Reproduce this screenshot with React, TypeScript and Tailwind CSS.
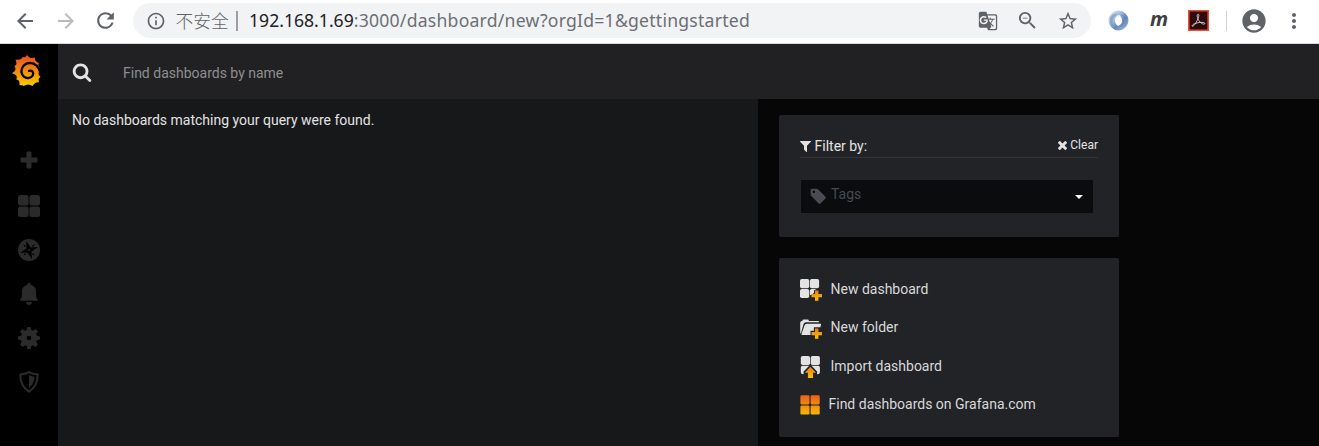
import type { ReactNode } from "react";
import {
  MdAccountCircle,
  MdArrowBack,
  MdArrowForward,
  MdGTranslate,
  MdMoreVert,
  MdOutlineInfo,
  MdRefresh,
  MdStarBorder,
  MdZoomOut,
} from "react-icons/md";

function BrowserBar() {
  return (
    <header className="flex h-[44px] shrink-0 items-start border-b border-[#d5d7da] bg-white pt-[3px] text-[#5f6368]">
      <div className="flex h-[35px] w-[133px] shrink-0 items-center pl-[13px]">
        <MdArrowBack size={24} className="shrink-0" />
        <MdArrowForward size={24} className="ml-[17px] shrink-0 text-[#b9bbbd]" />
        <MdRefresh size={25} className="ml-[15px] shrink-0" />
      </div>
      <div className="flex h-[35px] w-[958px] shrink-0 items-center rounded-full bg-[#f1f3f4] pl-[12.5px]">
        <MdOutlineInfo size={20} className="shrink-0" />
        <div className="ml-[10px] w-[60px] shrink-0 whitespace-nowrap font-['Noto_Sans_CJK_SC',sans-serif] text-[17.7px] leading-[35px] font-light">
          不安全
        </div>
        <div className="h-[20px] w-[2px] shrink-0 bg-[#9b9ea2]" />
        <div className="ml-[11.5px] w-[729px] whitespace-nowrap pb-px font-['Noto_Sans','Open_Sans',sans-serif] text-[17.6px] leading-[34px]">
          <span className="text-[#202124]">192.168.1.69</span>
          <span className="tracking-[0.235px] text-[#6b6f74]">:3000/dashboard/new?orgId=1&amp;gettingstarted</span>
        </div>
        <MdGTranslate size={20} className="shrink-0" />
        <MdZoomOut size={23} className="ml-[18px] shrink-0" />
        <MdStarBorder size={22} className="ml-[18px] shrink-0" />
      </div>
      <div className="flex h-[35px] flex-1 items-center pl-[17px]">
        <svg width="21" height="21" viewBox="0 0 21 21" className="shrink-0">
          <defs>
            <linearGradient id="ring" x1="0" y1="0" x2="1" y2="1">
              <stop offset="0" stopColor="#e8f0f8" />
              <stop offset=".35" stopColor="#a8c0dc" />
              <stop offset=".6" stopColor="#6289bb" />
              <stop offset="1" stopColor="#b5cbe3" />
            </linearGradient>
          </defs>
          <path fillRule="evenodd" fill="url(#ring)" d="M10.500.5a10 10 0 1 1 0 20a10 10 0 0 1 0-20zm.5 4.500c-3.500 1.500-4.500 3.500-4 6.500.5 2 1.500 3.500 3 4.500 3.500-1.500 4.500-3.500 4-6.500-.5-2-1.500-3.500-3-4.500z" />
          <path d="M11 5c3-.5 5.500 2 5 5-.5 3-2.500 5-6 6 5 2 9 0 9.500-5 0-4-3.500-7-8.500-6z" fill="#587fae" opacity=".35" />
          <path d="M2.500 7c-1.500 4 0 8 3 9.500C4 13 4 9 7 6.500 8 5 9 4 10 3.500 6 3 3.500 4.500 2.500 7z" fill="#6e93bf" opacity=".6" />
        </svg>
        <div className="ml-[20px] flex h-[30px] w-[20px] shrink-0 items-center justify-center pb-[3px] font-['Open_Sans',sans-serif] text-[20px] leading-[30px] font-bold text-[#3c3f40] italic">
          m
        </div>
        <svg width="21" height="21" viewBox="0 0 21 21" className="ml-[19px] shrink-0">
          <path d="M.8.800h19.400v19.400H.8z" fill="#2b0b0e" stroke="#f04a35" strokeWidth="1.600" />
          <path d="M9.900 4.200c-1.300.4-.7 3.200.2 5 .9 2 2.500 3.800 4.500 4.700 1.500.6 2.500.1 2.200-.6-.6-1.200-4.300-1.200-7.600-.4-2.600.6-5 1.900-5.100 2.900-.1 1 1.300.5 2.600-1.200 1.600-2.200 3.500-5.800 4-8 .4-1.600 0-2.700-.8-2.400z" fill="none" stroke="#e0d3d3" strokeWidth=".9" />
        </svg>
        <div className="ml-[17px] h-[20px] w-px shrink-0 bg-[#cfd1d4]" />
        <MdAccountCircle size={28} className="ml-[13px] shrink-0" />
        <MdMoreVert size={24} className="ml-[14px] shrink-0" />
      </div>
    </header>
  );
}

function Gradients() {
  return (
    <svg width="0" height="0" className="absolute">
      <defs>
        <linearGradient id="flame" x1="0" y1="0" x2="0" y2="1">
          <stop offset="0" stopColor="#ea4e1b" />
          <stop offset=".25" stopColor="#ee6a1c" />
          <stop offset=".65" stopColor="#f59a0b" />
          <stop offset="1" stopColor="#fbd000" />
        </linearGradient>
        <linearGradient id="amber" x1="0" y1="0" x2="0" y2="1">
          <stop offset="0" stopColor="#eb7b18" />
          <stop offset="1" stopColor="#f8c300" />
        </linearGradient>
        <linearGradient id="tiles" x1="0" y1="0" x2="0" y2="20" gradientUnits="userSpaceOnUse">
          <stop offset="0" stopColor="#eb5f19" />
          <stop offset="1" stopColor="#f6b905" />
        </linearGradient>
      </defs>
    </svg>
  );
}

function GrafanaLogo() {
  return (
    <svg width="30" height="31" viewBox="0 0 30 31" className="mr-[5px]">
      <path
        d="M15 0q1.500 2.200 3.600 2.900 2 .2 4.200-.4-.1 2 .7 3.200 1.300 1.600 3.200 2.300l-.3 2.400q1.900 2.600 2.200 6.100l-1.900.5q-.4 1.800.3 3.200l1.500 1.600q-1.800 1.400-1.900 2.700l.4 2.700q-2.500-.1-3.800.7-1.800 1.200-2.700 3.100-2-1.600-4.200-1.600-2.400 0-4.600 1.500-.9-.9-2.300-.6l-2-.2q.5-2.500-.3-4.200-.7-1.100-2.800-1.400.8-2.300.3-3.500Q3.700 19.600 0 18.300q2.900-1.700 3.500-3.500.2-1.700-1.100-3.800 1.700-.5 2-1.700.4-1.800-.9-4.800 3.300.7 5.400-.5 1.200-.8 1.800-2.100l2.400.3z"
        fill="url(#flame)"
      />
      <path
        d="M28.800 18.300C27 12.500 23.500 8 18 7.900c-5.500.1-8.900 4.600-8.500 9.200.3 3.900 3.600 6.300 7 5.900 3.300-.3 5-2.900 4.500-5.200-.5-2-2.300-2.700-3.900-1.900"
        fill="none"
        stroke="#000"
        strokeWidth="2.300"
        strokeLinecap="round"
      />
    </svg>
  );
}

function SideMenu() {
  return (
    <nav className="flex w-[58px] shrink-0 flex-col items-center bg-black pt-[11px] text-[#2b2b2c]">
      <GrafanaLogo />
      <div className="mt-[62px] flex flex-col items-center gap-[22px]">
        <svg width="22" height="25" viewBox="0 0 22 25" fill="currentColor">
          <path d="M9.700 3.500h2.600q1.200 0 1.200 1.200v4.800h4.800q1.200 0 1.200 1.200v2.600q0 1.200-1.200 1.200h-4.800v4.800q0 1.200-1.200 1.200H9.700q-1.200 0-1.200-1.200v-4.800H3.700q-1.200 0-1.200-1.200v-2.600q0-1.200 1.200-1.200h4.800V4.700q0-1.200 1.200-1.200z" />
        </svg>
        <svg width="22" height="22" viewBox="0 0 22 22" fill="currentColor">
          <rect width="10.600" height="10.600" rx="2.500" />
          <rect x="11.400" width="10.600" height="10.600" rx="2.500" />
          <rect y="11.400" width="10.600" height="10.600" rx="2.500" />
          <rect x="11.400" y="11.400" width="10.600" height="10.600" rx="2.500" />
        </svg>
        <svg width="22" height="22" viewBox="0 0 22 22" fill="currentColor">
          <circle cx="11" cy="11" r="11" />
          <g fill="#000">
            <path d="M8.200 1.800 12.800 8.400l7.400-.4-6.600 4.600.4 7.600-4.700-6.600-7.500.5 6.700-4.700z" />
            <path d="m16.600 5.300-1.300 2.800-1.400-1.400zM5.400 16.700l1.300-2.800 1.400 1.400zM5.300 5.400l2.800 1.300-1.400 1.400zM16.700 16.600l-2.800-1.300 1.400-1.400z" />
          </g>
          <circle cx="11" cy="11" r="1.100" />
        </svg>
        <svg width="22" height="22" viewBox="0 0 22 22" fill="currentColor">
          <path d="M11 0c1 0 1.600.7 1.600 1.700 3.300.8 5.500 3.700 5.500 7.300v5.500l1.600 1.700c.6.600.2 1.500-.6 1.500H2.900c-.8 0-1.200-.9-.6-1.500l1.600-1.700V9c0-3.600 2.200-6.500 5.500-7.300C9.400.7 10 0 11 0zM8 19h6c-.3 1.900-1.400 3-3 3s-2.700-1.100-3-3z" />
        </svg>
        <svg width="22" height="22" viewBox="0 0 22 22" fill="currentColor">
          <path fillRule="evenodd" d="M9.400 0h3.200l.6 3.100 1.700.7 2.700-1.800 2.400 2.400-1.800 2.700.7 1.700 3.100.6v3.200l-3.100.6-.7 1.700 1.800 2.700-2.400 2.400-2.700-1.800-1.700.7-.6 3.100H9.400l-.6-3.100-1.700-.7L4.400 20 2 17.600l1.800-2.700-.7-1.700L0 12.600V9.400l3.100-.6.7-1.700L2 4.400 4.400 2l2.700 1.800 1.700-.7zM11 8.700a2.300 2.300 0 1 0 0 4.600 2.300 2.300 0 0 0 0-4.600z" />
        </svg>
        <svg width="22" height="22" viewBox="0 0 22 22">
          <path d="M11 1.200c2.600 1.700 5.600 2.300 8.700 2.300.3 7.500-3.200 13.500-8.700 17.200C5.500 17 2 11 2.300 3.500c3.100 0 6.100-.6 8.700-2.300z" fill="none" stroke="currentColor" strokeWidth="2" />
          <path d="M11 4c2 1 3.700 1.500 5.500 1.700-.2 4.700-2 8.400-5.500 11.300z" fill="currentColor" />
        </svg>
      </div>
    </nav>
  );
}

function SearchBar() {
  return (
    <div className="flex h-[55px] shrink-0 items-center bg-[#212124] pl-[14px]">
      <svg width="20" height="20" viewBox="0 0 1792 1792" fill="#e3e3e3" className="mt-[1px]">
        <path d="M1216 832q0-185-131.500-316.500t-316.500-131.500-316.500 131.500-131.500 316.500 131.500 316.500 316.500 131.500 316.500-131.500 131.500-316.500zm512 832q0 52-38 90t-90 38q-54 0-90-38l-343-342q-179 124-399 124-143 0-273.500-55.500t-225-150-150-225-55.500-273.500 55.500-273.500 150-225 225-150 273.500-55.500 273.500 55.500 225 150 150 225 55.500 273.500q0 220-124 399l343 343q37 37 37 90z" />
      </svg>
      <div className="ml-[31px] pt-[3px] text-[14px] leading-[20px] text-[#8e8e8e]">Find dashboards by name</div>
    </div>
  );
}

function FilterCard() {
  return (
    <section className="h-[122px] rounded-[2px] bg-[#222326] px-[21px] pt-[20px]">
      <div className="flex h-[23px] items-start border-b border-[#343437]">
        <svg viewBox="192 256 1408 1408" preserveAspectRatio="none" fill="#e3e3e3" className="mt-[6px] h-[11px] w-[11px]">
          <path d="M1595 295q17 41-14 70l-493 493v742q0 42-39 59-13 5-25 5-27 0-45-19l-256-256q-19-19-19-45v-486l-493-493q-31-29-14-70 17-39 59-39h1280q42 0 59 39z" />
        </svg>
        <h2 className="ml-[3.500px] pt-px text-[14px] leading-[20px] text-[#e3e3e3]">Filter by:</h2>
        <div className="ml-auto flex items-center text-[12px] leading-[20px] text-[#e3e3e3]">
          <svg width="9" height="9" viewBox="302 366 1188 1188" fill="#e3e3e3" className="mt-px mr-[3px]">
            <path d="M1490 1322q0 40-28 68l-136 136q-28 28-68 28t-68-28l-294-294-294 294q-28 28-68 28t-68-28l-136-136q-28-28-28-68t28-68l294-294-294-294q-28-28-28-68t28-68l136-136q28-28 68-28t68 28l294 294 294-294q28-28 68-28t68 28l136 136q28 28 28 68t-28 68l-294 294 294 294q28 28 28 68z" />
          </svg>
          Clear
        </div>
      </div>
      <div className="mt-[22px] ml-px flex h-[33px] w-[292px] items-center bg-[#0b0c0e] pr-[10px] pl-[9px]">
        <svg width="16" height="16" viewBox="64 64 1600 1600" fill="#4a4c52" className="mb-px">
          <path d="M576 448q0-53-37.500-90.500t-90.500-37.500-90.500 37.500-37.500 90.500 37.500 90.500 90.500 37.500 90.500-37.500 37.500-90.500zm1067 576q0 53-37 90l-491 492q-39 37-91 37-53 0-90-37l-715-716q-38-37-64.500-101t-26.500-117v-416q0-52 38-90t90-38h416q53 0 117 26.500t102 64.500l715 714q37 39 37 91z" />
        </svg>
        <span className="ml-[5px] pb-[5px] text-[14px] leading-[20px] text-[#464950]">Tags</span>
        <svg width="8" height="4" viewBox="0 0 8 4" fill="#fff" className="mt-px ml-auto">
          <path d="M0 0h8L4 4z" />
        </svg>
      </div>
    </section>
  );
}

const plus = "M15 11.500h3.400v3.400H22v3.300h-3.600v3.500H15v-3.500h-3.500v-3.300H15z";

function NewDashboardIcon() {
  return (
    <svg width="22" height="22" viewBox="0 0 22 22">
      <g fill="#e3e3e3">
        <rect width="9.200" height="9.200" rx="1.800" />
        <rect x="9.900" width="9.200" height="9.200" rx="1.800" />
        <rect y="9.900" width="9.200" height="9.200" rx="1.800" />
        <path d="M11.500 9.900h4.800l-2.300 1.500v2.500l-3.500 2.400q-.6-.5-.6-1v-3.800q0-1.600 1.600-1.600z" />
      </g>
      <path d={plus} fill="url(#amber)" />
    </svg>
  );
}

function NewFolderIcon() {
  return (
    <svg width="22" height="22" viewBox="0 0 22 22">
      <path fill="#e3e3e3" d="M.2 15.500V5.700Q.2 4 1.900 4h.5V3.700q0-1.200 1.200-1.200h4q1.200 0 1.200 1.200V4h9q1.500 0 1.500 1.300H6Q4.200 5.300 3.600 7L.9 16.500Q.2 16.500.2 15.500zM6.700 6.700h13.600q1 0 .7 1l-.6 2.600h-6.500v3.400H10.500V18H2.200q-1 0-.7-1L4.600 8.200Q5.100 6.700 6.700 6.700z" />
      <path d={plus} fill="url(#amber)" />
    </svg>
  );
}

function ImportIcon() {
  return (
    <svg width="22" height="22" viewBox="0 0 22 22">
      <g fill="#e3e3e3">
        <rect x=".8" width="9.200" height="9" rx="1.800" />
        <rect x="10.700" width="9.200" height="9" rx="1.800" />
        <path d="M2.400 9.800h6.800L3.600 15.500v2.800q-2.800.2-2.800-2v-4.900q0-1.600 1.600-1.600zM18.300 9.800h-6.800l5.600 5.700v2.800q2.800.2 2.800-2v-4.900q0-1.600-1.600-1.600z" />
      </g>
      <path d="m10.400 10.800 5.500 6H13V22H7.900v-5.200H4.900z" fill="url(#amber)" />
    </svg>
  );
}

function GrafanaTilesIcon() {
  return (
    <svg width="20" height="20" viewBox="0 0 20 20" fill="url(#tiles)">
      <rect x=".4" y=".3" width="9.100" height="9.100" rx="1.300" />
      <rect x="10.600" y=".3" width="9.100" height="9.100" rx="1.300" />
      <rect x=".4" y="10.500" width="9.100" height="9.100" rx="1.300" />
      <rect x="10.600" y="10.500" width="9.100" height="9.100" rx="1.300" />
    </svg>
  );
}

function ActionRow({ icon, children }: { icon: ReactNode; children: ReactNode }) {
  return (
    <a className="flex h-[22px] items-center gap-[8.500px] text-[14px] leading-[20px] text-[#d8d9da]">
      {icon}
      <span className="whitespace-nowrap pb-[2px]">{children}</span>
    </a>
  );
}

function ActionsCard() {
  return (
    <section className="flex h-[179px] flex-col rounded-[2px] bg-[#222326] px-[21px] pt-[21px]">
      <ActionRow icon={<NewDashboardIcon />}>New dashboard</ActionRow>
      <div className="mt-[16px]">
        <ActionRow icon={<NewFolderIcon />}>New folder</ActionRow>
      </div>
      <div className="mt-[17px]">
        <ActionRow icon={<ImportIcon />}>Import dashboard</ActionRow>
      </div>
      <div className="mt-[16px]">
        <ActionRow icon={<GrafanaTilesIcon />}>Find dashboards on Grafana.com</ActionRow>
      </div>
    </section>
  );
}

export default function App() {
  return (
    <div className="flex h-screen flex-col overflow-hidden bg-black font-['Roboto',sans-serif]">
      <Gradients />
      <BrowserBar />
      <div className="flex min-h-0 flex-1">
        <SideMenu />
        <div className="flex min-w-0 flex-1 flex-col">
          <SearchBar />
          <div className="flex min-h-0 flex-1 bg-[#060606]">
            <main className="w-[700px] shrink-0 bg-[#17181a] pt-[11px] pl-[14px] text-[14px] leading-[20px] text-[#e3e3e3]">
              No dashboards matching your query were found.
            </main>
            <aside className="ml-[21px] flex w-[340px] flex-col gap-[21px] pt-[16px]">
              <FilterCard />
              <ActionsCard />
            </aside>
          </div>
        </div>
      </div>
    </div>
  );
}
